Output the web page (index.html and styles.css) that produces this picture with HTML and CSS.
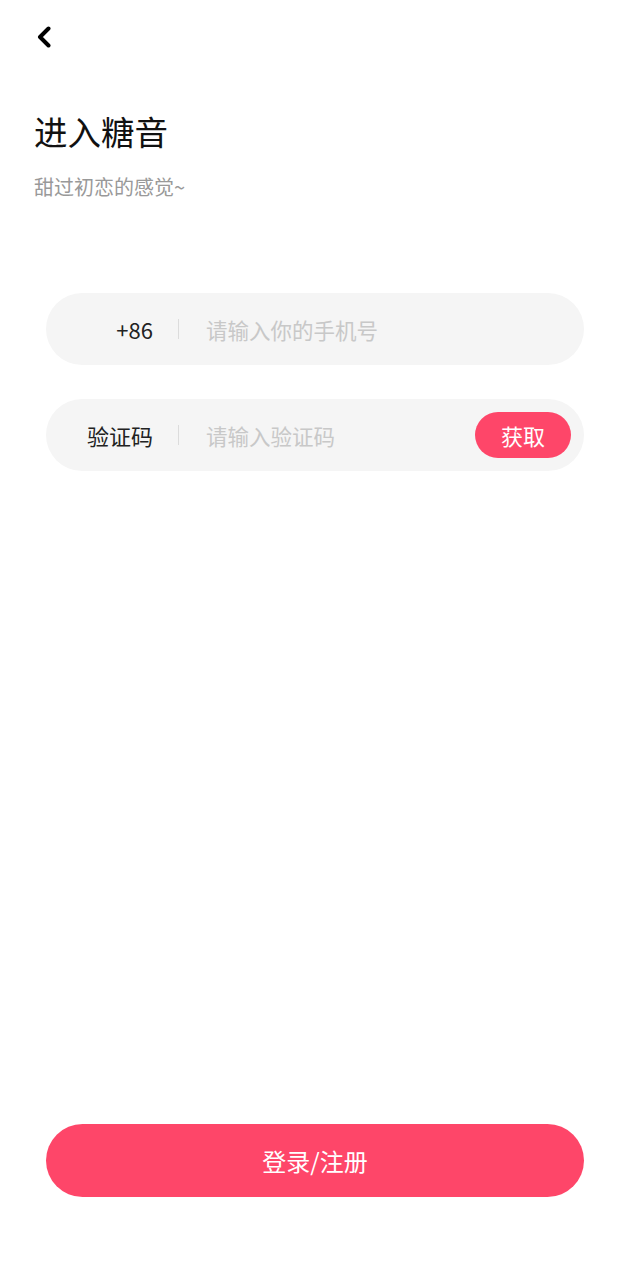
FILE: index.html
```html
<!DOCTYPE html>
<html lang="zh">
<head>
<meta charset="utf-8">
<link rel="stylesheet" href="styles.css">
</head>
<body>
<div class="page">
  <div class="topbar">
    <svg class="back" width="16" height="22" viewBox="0 0 16 22"><path d="M12.5 2.5 L4 11 L12.5 19.5" fill="none" stroke="#000" stroke-width="4" stroke-linecap="round" stroke-linejoin="round"/></svg>
  </div>
  <h1 class="title">进入糖音</h1>
  <p class="subtitle">甜过初恋的感觉~</p>
  <div class="form">
    <div class="field">
      <span class="label">+86</span>
      <span class="divider"></span>
      <span class="placeholder">请输入你的手机号</span>
    </div>
    <div class="field">
      <span class="label">验证码</span>
      <span class="divider"></span>
      <span class="placeholder">请输入验证码</span>
      <span class="get">获取</span>
    </div>
  </div>
  <div class="spacer"></div>
  <div class="submit">登录/注册</div>
</div>
</body>
</html>
```
FILE: styles.css
```css
html, body {
  margin: 0;
  padding: 0;
  background: #fff;
}
body {
  font-family: "Noto Sans CJK SC", "Noto Sans", sans-serif;
}
.page {
  width: 630px;
  height: 1280px;
  display: flex;
  flex-direction: column;
  box-sizing: border-box;
}
.topbar {
  height: 74px;
  padding-left: 36px;
  padding-top: 26px;
  box-sizing: border-box;
}
.back {
  display: block;
}
.title {
  margin: 33px 0 0 34px;
  font-size: 33.5px;
  font-weight: 400;
  line-height: 48px;
  color: #111;
}
.subtitle {
  margin: 18px 0 0 34px;
  font-size: 20px;
  line-height: 28px;
  color: #999;
}
.form {
  margin: 92px 46px 0 46px;
  display: flex;
  flex-direction: column;
  gap: 34px;
}
.field {
  height: 72px;
  border-radius: 36px;
  background: #f5f5f5;
  display: flex;
  align-items: center;
  padding-right: 13px;
}
.label {
  width: 107px;
  text-align: right;
  font-size: 22px;
  color: #222;
}
.divider {
  width: 1px;
  height: 20px;
  background: #dcdcdc;
  margin: 0 27px 0 25px;
}
.placeholder {
  flex: 1;
  font-size: 21.5px;
  color: #c8c8c8;
}
.get {
  width: 96px;
  height: 46px;
  border-radius: 23px;
  background: #fe4669;
  color: #fff;
  font-size: 22px;
  display: flex;
  align-items: center;
  justify-content: center;
}
.spacer {
  flex: 1;
}
.submit {
  margin: 0 46px 83px 46px;
  height: 73px;
  border-radius: 37px;
  background: #fe4669;
  color: #fff;
  font-size: 24px;
  display: flex;
  align-items: center;
  justify-content: center;
}
```
